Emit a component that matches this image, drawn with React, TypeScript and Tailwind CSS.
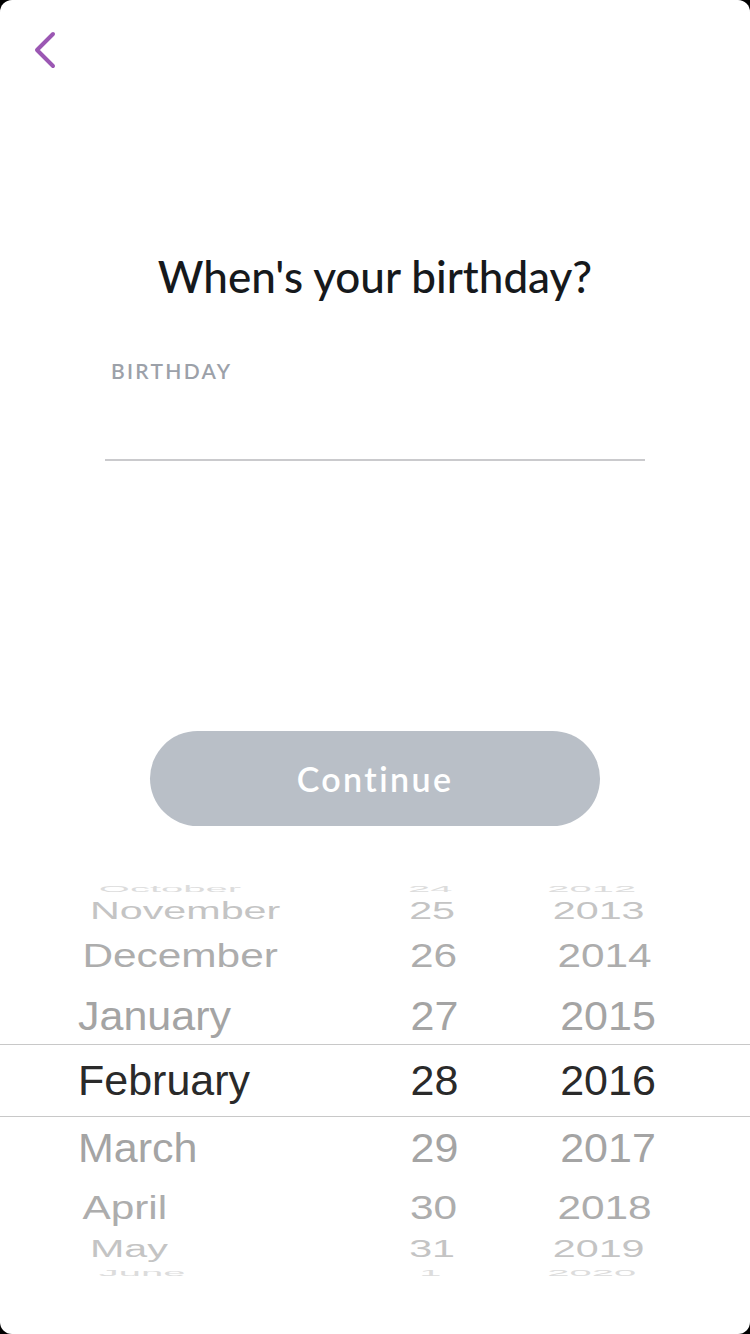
import React from "react";

interface WheelRow {
    month: string;
    day: string;
    year: string;
    height: string;
    tilt: string;
    tone: string;
    selected?: boolean;
}

// Rows of the date wheel, top to bottom. Heights and scales fake the cylinder projection.
const rows: WheelRow[] = [
    { month: "October", day: "24", year: "2012", height: "h-[24px]", tilt: "scale-x-[0.93] scale-y-[0.22]", tone: "text-[#dcdcdc]" },
    { month: "November", day: "25", year: "2013", height: "h-[22px]", tilt: "scale-x-[0.96] scale-y-[0.55]", tone: "text-[#c4c4c4]" },
    { month: "December", day: "26", year: "2014", height: "h-[66px]", tilt: "scale-x-[0.985] scale-y-[0.78]", tone: "text-[#adadad]" },
    { month: "January", day: "27", year: "2015", height: "h-[56px]", tilt: "scale-y-[0.94]", tone: "text-[#a4a4a4]" },
    { month: "February", day: "28", year: "2016", height: "h-[73px]", tilt: "", tone: "text-[#2a2a2a]", selected: true },
    { month: "March", day: "29", year: "2017", height: "h-[62px]", tilt: "scale-y-[0.94]", tone: "text-[#a4a4a4]" },
    { month: "April", day: "30", year: "2018", height: "h-[56px]", tilt: "scale-x-[0.985] scale-y-[0.78]", tone: "text-[#adadad]" },
    { month: "May", day: "31", year: "2019", height: "h-[28px]", tilt: "scale-x-[0.96] scale-y-[0.55]", tone: "text-[#c4c4c4]" },
    { month: "June", day: "1", year: "2020", height: "h-[18px]", tilt: "scale-x-[0.93] scale-y-[0.22]", tone: "text-[#dcdcdc]" },
];

function DateWheel() {
    return (
        <div className="mt-[50px] flex flex-col font-['Liberation_Sans',Arial,sans-serif] text-[43px] leading-none">
            {rows.map((row) => (
                <div
                    key={row.month}
                    className={`flex items-center ${row.height} ${row.selected ? "border-y border-[#c8c8c8]" : ""}`}
                >
                    <div className={`grid w-full grid-cols-[300px_113px_234px] pl-[78px] ${row.tilt} ${row.tone}`}>
                        <span>{row.month}</span>
                        <span className="text-center">{row.day}</span>
                        <span className="text-center">{row.year}</span>
                    </div>
                </div>
            ))}
        </div>
    );
}

export default function App() {
    return (
        <div className="min-h-[1334px] bg-black">
            <div className="flex h-[1334px] flex-col overflow-hidden rounded-[12px] bg-white">
                <div className="pl-[33px] pt-[30px]">
                    <button type="button" aria-label="Back" className="block">
                        <svg width="24" height="40" viewBox="0 0 24 40" fill="none" stroke="#9b57b3" strokeWidth={4} strokeLinecap="round" strokeLinejoin="round">
                            <path d="M20 4 L4 20 L20 36" />
                        </svg>
                    </button>
                </div>

                <h1 className="mt-[184px] text-center font-['Lato',sans-serif] text-[44px] font-medium leading-none text-[#16191c]">
                    When's your birthday?
                </h1>

                <div className="mx-auto mt-[62px] w-[540px]">
                    <p className="pl-[6px] font-['Lato',sans-serif] text-[21px] font-semibold leading-none tracking-[2.3px] text-[#9ca1a9]">BIRTHDAY</p>
                    <div className="mt-[78px] h-[2px] bg-[#cacacd]" />
                </div>

                <button
                    type="button"
                    className="mx-auto mt-[270px] flex h-[95px] w-[450px] items-center justify-center rounded-full bg-[#b9bfc7] font-['Lato',sans-serif] text-[34px] font-semibold tracking-[2.4px] text-white"
                >
                    Continue
                </button>

                <DateWheel />
            </div>
        </div>
    );
}
